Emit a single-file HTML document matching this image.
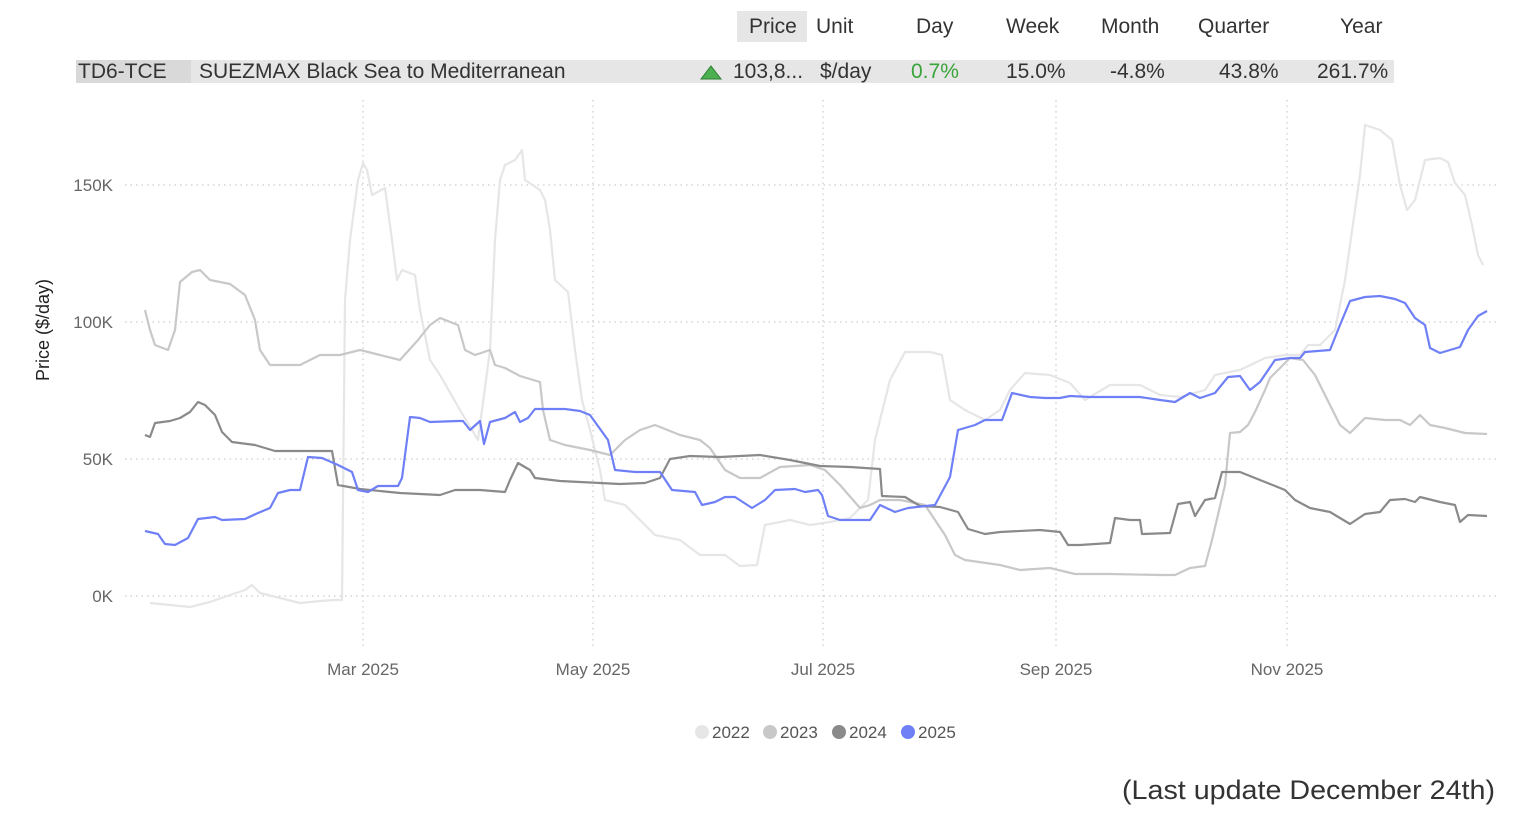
<!DOCTYPE html><html><head><meta charset="utf-8"><style>
body{margin:0;width:1518px;height:836px;background:#fff;overflow:hidden;font-family:"Liberation Sans Narrow","Liberation Sans",sans-serif;color:#333}
.t{position:absolute;font-size:21px;white-space:nowrap}
</style></head><body>
<div style="position:absolute;left:737px;top:11px;width:70px;height:31px;background:#e6e6e6"></div>
<div style="position:absolute;left:76px;top:60px;width:1318px;height:23px;background:#e6e6e6"></div>
<div style="position:absolute;left:76px;top:60px;width:115px;height:23px;background:#d9d9d9"></div>
<div class="t" style="left:749px;top:15px">Price</div>
<div class="t" style="left:816px;top:15px">Unit</div>
<div class="t" style="left:916px;top:15px">Day</div>
<div class="t" style="left:1006px;top:15px">Week</div>
<div class="t" style="left:1101px;top:15px">Month</div>
<div class="t" style="left:1198px;top:15px">Quarter</div>
<div class="t" style="left:1340px;top:15px">Year</div>
<div class="t" style="left:78px;top:60px">TD6-TCE</div>
<div class="t" style="left:199px;top:60px">SUEZMAX Black Sea to Mediterranean</div>
<svg style="position:absolute;left:700px;top:65px" width="22" height="15"><polygon points="11,1 21,14 1,14" fill="#4caf50" stroke="#2e7d32" stroke-width="1"/></svg>
<div class="t" style="left:733px;top:60px">103,8...</div>
<div class="t" style="left:820px;top:60px">$/day</div>
<div class="t" style="left:911px;top:60px;color:#3aa43a">0.7%</div>
<div class="t" style="left:1006px;top:60px">15.0%</div>
<div class="t" style="left:1110px;top:60px">-4.8%</div>
<div class="t" style="left:1219px;top:60px">43.8%</div>
<div class="t" style="left:1317px;top:60px">261.7%</div>
<svg style="position:absolute;left:0;top:0" width="1518" height="836" font-family="Liberation Sans Narrow,Liberation Sans,sans-serif">
<g stroke="#ccc" stroke-dasharray="1.5,4" stroke-width="1.2">
<line x1="125" y1="185" x2="1500" y2="185"/><line x1="125" y1="322" x2="1500" y2="322"/><line x1="125" y1="459" x2="1500" y2="459"/><line x1="125" y1="596" x2="1500" y2="596"/>
<line x1="363" y1="100" x2="363" y2="650"/><line x1="593" y1="100" x2="593" y2="650"/><line x1="823" y1="100" x2="823" y2="650"/><line x1="1056" y1="100" x2="1056" y2="650"/><line x1="1287" y1="100" x2="1287" y2="650"/>
</g>
<g font-size="17" fill="#666" text-anchor="end"><text x="113" y="191">150K</text><text x="113" y="328">100K</text><text x="113" y="465">50K</text><text x="113" y="602">0K</text></g>
<g font-size="17" fill="#666" text-anchor="middle"><text x="363" y="675">Mar 2025</text><text x="593" y="675">May 2025</text><text x="823" y="675">Jul 2025</text><text x="1056" y="675">Sep 2025</text><text x="1287" y="675">Nov 2025</text></g>
<text transform="translate(49,330) rotate(-90)" text-anchor="middle" font-size="18" fill="#222">Price ($/day)</text>
<g fill="none" stroke-width="2.2" stroke-linejoin="round">
<polyline stroke="#e6e6e6" points="150,603 170,605 190,607 210,602 230,595 245,590 252,585 260,593 280,598 300,603 320,601 335,600 342,600 345,300 350,240 358,180 363,163 367,170 372,195 385,188 392,240 397,280 402,270 415,275 420,310 430,360 440,375 460,410 478,440 490,350 495,240 500,180 505,165 515,160 522,150 525,180 540,190 545,200 550,230 555,280 568,292 575,350 582,400 590,430 600,470 605,500 625,505 640,520 655,535 680,540 700,555 725,555 740,566 757,565 765,525 790,520 810,525 830,522 850,518 868,500 875,440 890,380 905,352 930,352 942,355 950,400 965,410 985,420 1000,410 1010,390 1025,373 1050,375 1070,383 1085,400 1110,385 1140,385 1160,395 1180,397 1205,390 1215,375 1240,370 1265,358 1285,355 1300,355 1308,345 1320,345 1335,330 1345,280 1360,175 1365,125 1380,130 1392,140 1400,185 1407,210 1415,200 1425,160 1440,158 1448,162 1455,183 1465,195 1472,225 1478,255 1483,265"/>
<polyline stroke="#c8c8c8" points="145,310 150,330 155,345 168,350 175,330 180,282 192,272 200,270 210,280 230,284 245,295 255,320 260,350 270,365 285,365 300,365 320,355 340,355 360,350 380,355 400,360 418,340 430,325 440,318 458,325 465,350 475,355 490,350 495,365 505,368 520,376 540,382 543,410 550,440 565,445 590,450 610,455 625,440 640,430 655,425 680,435 700,440 710,448 725,470 740,478 760,478 780,467 810,465 825,470 840,485 860,508 870,505 880,500 900,500 925,505 945,535 955,555 965,560 1000,565 1020,570 1050,568 1075,574 1110,574 1160,575 1175,575 1190,568 1205,566 1212,540 1225,485 1230,433 1240,432 1248,425 1255,412 1265,390 1270,378 1290,358 1303,360 1315,375 1330,405 1340,425 1350,433 1365,418 1385,420 1400,420 1410,425 1420,415 1430,425 1445,428 1465,433 1487,434"/>
<polyline stroke="#8a8a8a" points="145,435 150,437 155,423 170,421 180,418 190,412 198,402 205,405 215,415 222,432 232,442 255,445 275,451 300,451 332,451 338,485 360,489 400,493 440,495 455,490 480,490 505,492 510,480 518,463 530,470 535,478 560,481 600,483 620,484 645,483 660,478 670,459 690,456 720,457 760,455 790,460 820,466 850,467 880,469 882,496 905,497 920,506 940,507 958,512 968,529 985,534 1000,532 1040,530 1060,532 1068,545 1080,545 1110,543 1115,518 1130,520 1140,520 1142,534 1170,533 1178,504 1190,502 1195,516 1205,500 1215,498 1222,472 1240,472 1270,484 1285,490 1295,500 1310,508 1330,512 1350,524 1365,514 1380,512 1390,500 1405,499 1415,502 1420,497 1440,502 1455,505 1460,522 1468,515 1487,516"/>
<polyline stroke="#6f80f7" points="145,531 158,534 165,544 175,545 188,538 198,519 215,517 222,520 245,519 258,513 270,508 278,493 290,490 300,490 308,457 322,458 338,465 352,472 358,490 368,492 378,486 398,486 402,478 410,417 420,418 430,422 458,421 463,421 470,430 480,421 484,444 490,422 505,418 515,412 520,422 528,418 535,409 565,409 580,411 590,415 608,440 615,470 635,472 660,472 672,490 695,492 702,505 715,502 725,497 735,497 752,508 765,500 775,490 795,489 805,492 818,490 822,495 828,516 840,520 855,520 870,520 880,505 895,512 908,508 935,505 950,477 958,430 975,425 985,420 1002,420 1012,393 1030,397 1045,398 1060,398 1070,396 1090,397 1140,397 1160,400 1175,402 1190,393 1200,398 1215,393 1228,377 1240,376 1250,390 1260,382 1275,360 1290,358 1300,358 1305,352 1330,350 1340,325 1350,301 1365,297 1380,296 1395,299 1405,303 1415,318 1425,325 1430,348 1440,353 1460,347 1468,330 1478,316 1487,311"/>
</g>
<g font-size="17" fill="#555">
<circle cx="702" cy="732" r="7" fill="#e6e6e6"/><text x="712" y="738">2022</text>
<circle cx="770" cy="732" r="7" fill="#c8c8c8"/><text x="780" y="738">2023</text>
<circle cx="839" cy="732" r="7" fill="#8a8a8a"/><text x="849" y="738">2024</text>
<circle cx="908" cy="732" r="7" fill="#6f80f7"/><text x="918" y="738">2025</text>
</g>
<text x="1122" y="799" textLength="373" lengthAdjust="spacingAndGlyphs" font-family="Liberation Sans,sans-serif" font-size="27" fill="#333">(Last update December 24th)</text>
</svg>
</body></html>
